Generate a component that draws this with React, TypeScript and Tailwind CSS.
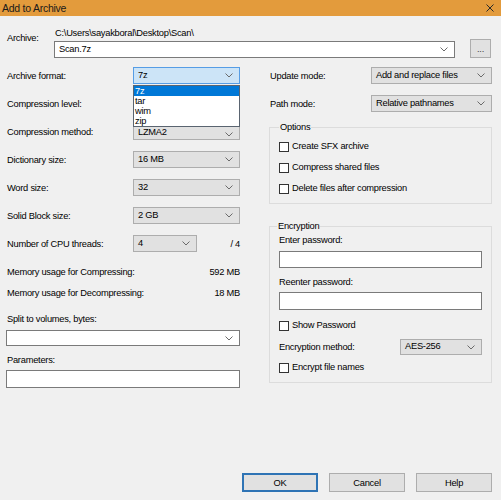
import React from "react";

const Chevron = () => (
  <svg width="8" height="5" viewBox="0 0 8 5" className="shrink-0">
    <polyline points="0.5,0.5 4,4 7.5,0.5" fill="none" stroke="#6a6a6a" strokeWidth="1" />
  </svg>
);

function Combo({ value, className }: { value: string; className: string }) {
  return (
    <div className={`flex items-center justify-between border pl-[4px] pr-[6px] ${className}`}>
      <span className="leading-none">{value}</span>
      <Chevron />
    </div>
  );
}

function Row({ label, value, children }: { label: string; value?: string; children?: React.ReactNode }) {
  return (
    <div className="flex items-center h-[17px]">
      <div className="flex-1 pl-[1px]">{label}</div>
      {children ?? <Combo value={value ?? ""} className="w-[107px] h-[17px] bg-[#e1e1e1] border-[#adadad]" />}
    </div>
  );
}

function Check({ label }: { label: string }) {
  return (
    <div className="flex items-center h-[14px]">
      <div className="w-[10px] h-[10px] border border-[#333] bg-white shrink-0" />
      <span className="ml-[3px] leading-none">{label}</span>
    </div>
  );
}

export default function App() {
  return (
    <div className="w-[501px] h-[500px] bg-[#f0f0f0] flex flex-col overflow-hidden font-['Liberation_Sans',Arial,sans-serif] text-[9.3px] tracking-[-0.25px] text-black leading-[12px]">
      {/* Title bar */}
      <div className="h-[16px] bg-[#e39b3c] flex items-center justify-between pl-[2px] pr-[7px] shrink-0">
        <span className="text-[10.5px] text-[#1a1a1a]">Add to Archive</span>
        <svg width="8" height="8" viewBox="0 0 8 8">
          <path d="M0.5 0.5 L7.5 7.5 M7.5 0.5 L0.5 7.5" stroke="#2a2a2a" strokeWidth="1" />
        </svg>
      </div>

      {/* Archive */}
      <div className="flex pl-[7px] pr-[10px] mt-[11px]">
        <div className="w-[47px] pt-[5px]">Archive:</div>
        <div className="flex-1 flex flex-col">
          <div className="pl-[1px] h-[12px]">C:\Users\sayakboral\Desktop\Scan\</div>
          <div className="flex items-start mt-[2px]">
            <Combo value="Scan.7z" className="w-[401px] h-[17px] bg-white border-[#7a7a7a]" />
            <div className="ml-auto -mt-[2px] w-[21px] h-[19px] bg-[#e1e1e1] border border-[#adadad] flex items-center justify-center text-[#444]">
              ...
            </div>
          </div>
        </div>
      </div>

      {/* Main */}
      <div className="flex mt-[9px] pl-[6px] pr-[9px]">
        {/* Left column */}
        <div className="w-[234px] flex flex-col">
          <div className="flex flex-col gap-[11px]">
            <div className="relative z-10">
              <Row label="Archive format:">
                <div className="relative w-[107px]">
                  <Combo value="7z" className="w-[107px] h-[17px] bg-[#cce4f7] border-[#569de5]" />
                  <div className="absolute left-0 top-full mt-[1px] w-[107px] bg-white border border-[#5a6470] flex flex-col">
                    <div className="h-[10px] bg-[#0078d7] text-white pl-[1px] leading-[10px]">7z</div>
                    <div className="h-[10px] pl-[1px] leading-[10px]">tar</div>
                    <div className="h-[10px] pl-[1px] leading-[10px]">wim</div>
                    <div className="h-[10px] pl-[1px] leading-[10px]">zip</div>
                  </div>
                </div>
              </Row>
            </div>
            <Row label="Compression level:" value="" />
            <Row label="Compression method:">
              <div className="w-[107px] h-[17px] bg-[#e1e1e1] border border-[#adadad] flex items-end justify-between pl-[4px] pr-[6px] pb-[2px]">
                <span className="leading-none">LZMA2</span>
                <Chevron />
              </div>
            </Row>
            <Row label="Dictionary size:" value="16 MB" />
            <Row label="Word size:" value="32" />
            <Row label="Solid Block size:" value="2 GB" />
            <Row label="Number of CPU threads:">
              <div className="w-[107px] flex items-center">
                <Combo value="4" className="w-[64px] h-[17px] bg-[#e1e1e1] border-[#adadad]" />
                <span className="ml-auto">/ 4</span>
              </div>
            </Row>
          </div>
          <div className="flex mt-[14px] pl-[1px]">
            <span className="flex-1">Memory usage for Compressing:</span>
            <span>592 MB</span>
          </div>
          <div className="flex mt-[9px] pl-[1px]">
            <span className="flex-1">Memory usage for Decompressing:</span>
            <span>18 MB</span>
          </div>
          <div className="mt-[14px] pl-[1px]">Split to volumes, bytes:</div>
          <div className="mt-[5px] h-[16px] bg-white border border-[#7a7a7a] flex items-center justify-end pr-[6px]">
            <Chevron />
          </div>
          <div className="mt-[8px] pl-[1px]">Parameters:</div>
          <div className="mt-[4px] h-[18px] bg-white border border-[#7a7a7a]" />
        </div>

        {/* Right column */}
        <div className="ml-[29px] flex-1 flex flex-col">
          <div className="flex flex-col gap-[11px]">
            <Row label="Update mode:">
              <Combo value="Add and replace files" className="w-[121px] h-[17px] bg-[#e1e1e1] border-[#adadad]" />
            </Row>
            <Row label="Path mode:">
              <Combo value="Relative pathnames" className="w-[121px] h-[17px] bg-[#e1e1e1] border-[#adadad]" />
            </Row>
          </div>

          <fieldset className="mt-[9px] border border-[#dcdcdc] pl-[9px] pr-[9px] pb-[7px] flex flex-col">
            <legend className="px-[1px] leading-[12px]">Options</legend>
            <div className="flex flex-col gap-[7px] pt-[7px]">
              <Check label="Create SFX archive" />
              <Check label="Compress shared files" />
              <Check label="Delete files after compression" />
            </div>
          </fieldset>

          <fieldset className="mt-[16px] border border-[#dcdcdc] pl-[9px] pr-[9px] pb-[7px] flex flex-col">
            <legend className="-ml-[2px] px-[1px] leading-[12px]">Encryption</legend>
            <div className="pt-[2px]">Enter password:</div>
            <div className="mt-[5px] h-[17px] bg-white border border-[#7a7a7a]" />
            <div className="mt-[8px]">Reenter password:</div>
            <div className="mt-[4px] h-[18px] bg-white border border-[#7a7a7a]" />
            <div className="mt-[9px]">
              <Check label="Show Password" />
            </div>
            <div className="mt-[6px] flex items-center h-[16px]">
              <span className="flex-1">Encryption method:</span>
              <Combo value="AES-256" className="w-[82px] h-[16px] bg-[#e1e1e1] border-[#adadad]" />
            </div>
            <div className="mt-[6px]">
              <Check label="Encrypt file names" />
            </div>
          </fieldset>
        </div>
      </div>

      {/* Buttons */}
      <div className="mt-auto flex justify-end gap-[11px] pr-[9px] pb-[8px]">
        <div className="w-[76px] h-[19px] bg-[#e1e1e1] border-2 border-[#2f74b5] flex items-center justify-center">OK</div>
        <div className="w-[76px] h-[19px] bg-[#e1e1e1] border border-[#adadad] flex items-center justify-center">Cancel</div>
        <div className="w-[76px] h-[19px] bg-[#e1e1e1] border border-[#adadad] flex items-center justify-center">Help</div>
      </div>
    </div>
  );
}
